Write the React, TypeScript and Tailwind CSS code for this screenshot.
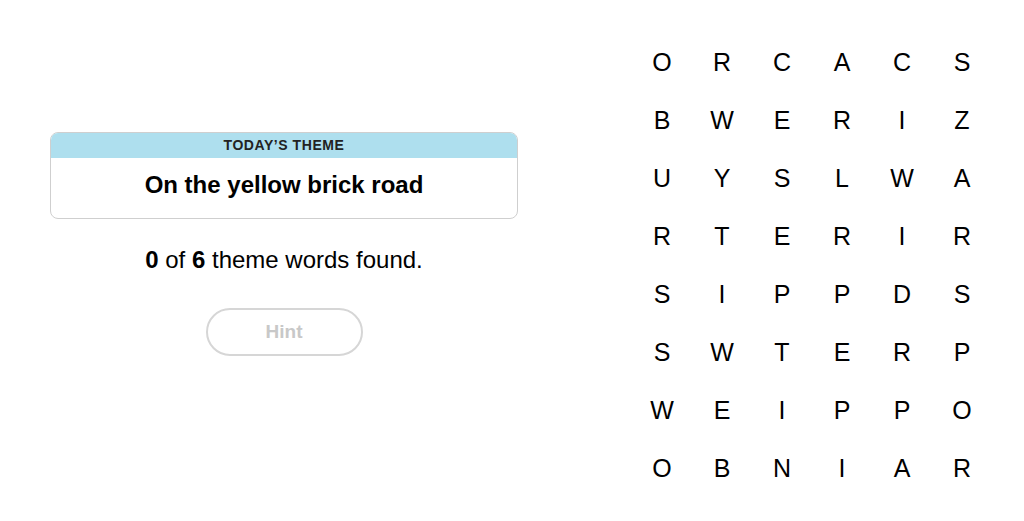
import React from "react";

const grid = [
  "ORCACS",
  "BWERIZ",
  "UYSLWA",
  "RTERIR",
  "SIPPDS",
  "SWTERP",
  "WEIPPO",
  "OBNIAR",
];

export default function App() {
  return (
    <div
      className="w-[1024px] h-[521px] bg-white flex items-start overflow-hidden text-black"
      style={{ fontFamily: '"Liberation Sans", Arial, sans-serif' }}
    >
      <div className="ml-[50px] w-[468px] pt-[132px] flex flex-col items-center">
        <div className="w-full border border-[#cfcfcf] rounded-[8px] overflow-hidden">
          <div className="h-[25px] bg-[#aedfee] flex items-center justify-center text-[14px] font-bold tracking-[0.04em] text-[#222]">
            TODAY’S THEME
          </div>
          <div className="h-[60px] flex items-center justify-center text-[24px] font-bold pb-[6px]">
            On the yellow brick road
          </div>
        </div>
        <div className="mt-[27px] text-[24px] leading-[28px]">
          <span className="font-bold">0</span> of <span className="font-bold">6</span> theme words found.
        </div>
        <div className="mt-[34px] w-[157px] h-[48px] rounded-full border-2 border-[#d6d6d6] flex items-center justify-center text-[19px] font-bold text-[#c8c8c8]">
          Hint
        </div>
      </div>
      <div className="ml-[114px] pt-[33px] grid grid-cols-6 content-start">
        {grid.map((row, r) =>
          row.split("").map((ch, c) => (
            <div
              key={`${r}-${c}`}
              className="w-[60px] h-[58px] flex items-center justify-center text-[25px] leading-none"
            >
              {ch}
            </div>
          ))
        )}
      </div>
    </div>
  );
}
